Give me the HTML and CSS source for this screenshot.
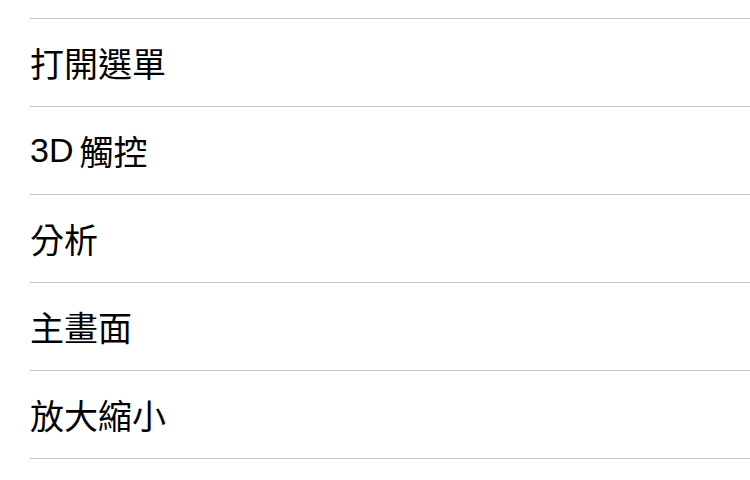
FILE: index.html
```html
<!DOCTYPE html>
<html lang="zh-Hant">
<head>
<meta charset="utf-8">
<link rel="stylesheet" href="styles.css">
</head>
<body>
<ul class="list">
  <li class="row">打開選單</li>
  <li class="row"><span class="latin">3D</span>觸控</li>
  <li class="row">分析</li>
  <li class="row">主畫面</li>
  <li class="row">放大縮小</li>
</ul>
</body>
</html>
```
FILE: styles.css
```css
html, body {
  margin: 0;
  padding: 0;
  background: #ffffff;
}
body {
  padding-top: 18px;
  font-family: "Liberation Sans", "Noto Sans CJK TC", sans-serif;
  color: #000000;
}
.list {
  list-style: none;
  margin: 0 0 0 30px;
  padding: 0;
  border-top: 1px solid #c8c7cc;
}
.row {
  height: 87px;
  display: flex;
  align-items: center;
  font-size: 34px;
  border-bottom: 1px solid #c8c7cc;
}
.latin {
  margin-right: 6px;
}
```
